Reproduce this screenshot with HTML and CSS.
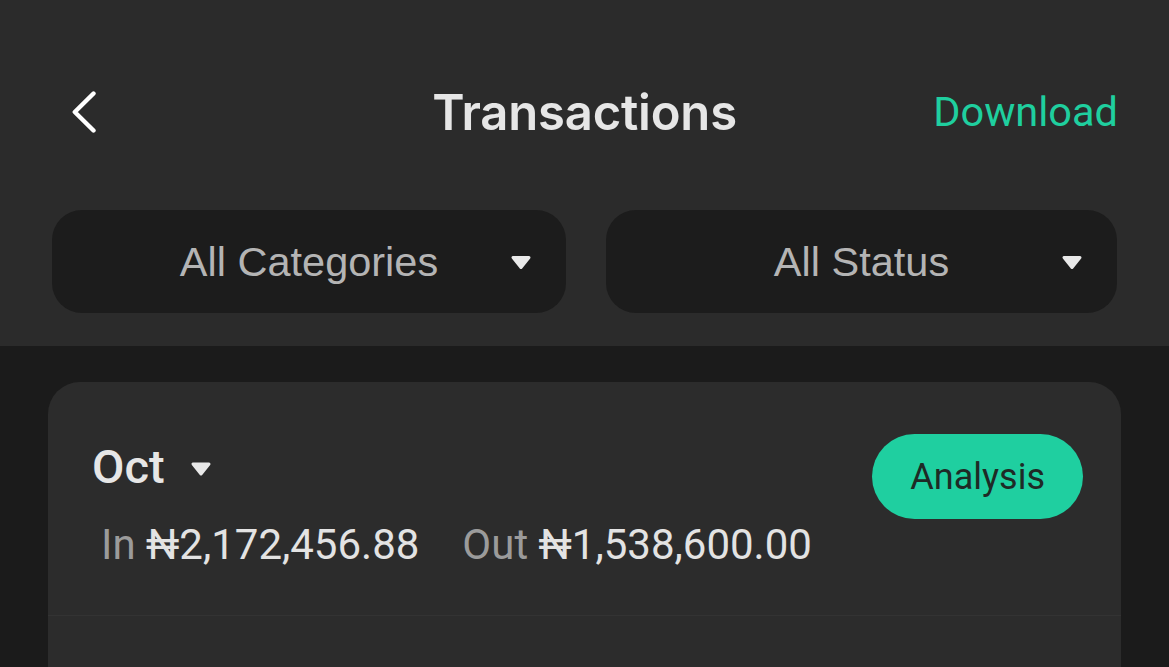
FILE: index.html
```html
<!DOCTYPE html>
<html lang="en">
<head>
<meta charset="utf-8">
<title>Transactions</title>
<link rel="stylesheet" href="styles.css">
</head>
<body>
<header class="top">
  <nav class="navbar">
    <button class="back" aria-label="Back">
      <svg width="24" height="42" viewBox="0 0 24 42"><path d="M21.5 2.5 L2.8 21 L21.5 39.5" fill="none" stroke="#ffffff" stroke-width="4.4" stroke-linecap="round" stroke-linejoin="round"/></svg>
    </button>
    <h1 class="title">Transactions</h1>
    <a class="download">Download</a>
  </nav>
  <div class="filters">
    <div class="select">
      <span class="select-label">All Categories</span>
      <svg class="caret" width="22" height="15" viewBox="0 0 22 15"><polygon points="3,2.5 19,2.5 11,12.5" fill="#e9e9e9" stroke="#e9e9e9" stroke-width="3" stroke-linejoin="round"/></svg>
    </div>
    <div class="select">
      <span class="select-label">All Status</span>
      <svg class="caret" width="22" height="15" viewBox="0 0 22 15"><polygon points="3,2.5 19,2.5 11,12.5" fill="#e9e9e9" stroke="#e9e9e9" stroke-width="3" stroke-linejoin="round"/></svg>
    </div>
  </div>
</header>
<main class="content">
  <section class="card">
    <div class="summary">
      <div class="summary-left">
        <div class="month">
          <span class="month-name">Oct</span>
          <svg class="month-caret" width="22" height="16" viewBox="0 0 22 16"><polygon points="3,3 19,3 11,13" fill="#e9e9e9" stroke="#e9e9e9" stroke-width="3" stroke-linejoin="round"/></svg>
        </div>
        <div class="totals">
          <span class="total"><span class="lbl">In</span> ₦2,172,456.88</span>
          <span class="total"><span class="lbl">Out</span> ₦1,538,600.00</span>
        </div>
      </div>
      <button class="analysis">Analysis</button>
    </div>
    <div class="list"></div>
  </section>
</main>
</body>
</html>
```
FILE: styles.css
```css
* { box-sizing: border-box; }
html, body { margin: 0; padding: 0; }
body {
  background: #1b1b1b;
  font-family: Roboto, "Noto Sans", sans-serif;
  height: 667px;
  overflow: hidden;
}
.top {
  background: #2b2b2b;
  padding: 14px 52px 33px;
}
.navbar {
  height: 196px;
  display: grid;
  grid-template-columns: 1fr auto 1fr;
  align-items: center;
}
.back {
  justify-self: start;
  background: none;
  border: 0;
  padding: 0;
  margin-left: 20px;
  display: flex;
}
.title {
  margin: 0;
  font-family: Inter, "Noto Sans", sans-serif;
  font-weight: 600;
  font-size: 49px;
  color: #e6e6e6;
  line-height: 1;
  letter-spacing: -0.2px;
}
.download {
  justify-self: end;
  font-size: 41.5px;
  color: #1fcf9f;
  line-height: 1;
  margin-right: -1px;
}
.filters {
  display: grid;
  grid-template-columns: 514px 511px;
  gap: 40px;
}
.select {
  height: 103px;
  border-radius: 30px;
  background: #1c1c1c;
  display: grid;
  grid-template-columns: 1fr auto 1fr;
  align-items: center;
}
.select-label {
  grid-column: 2;
  font-family: "Liberation Sans", Arial, sans-serif;
  font-size: 41.5px;
  color: #b4b4b4;
  line-height: 1;
}
.caret {
  grid-column: 3;
  justify-self: end;
  margin-top: 2px;
  margin-right: 34px;
}
.content {
  padding: 36px 48px 0;
}
.card {
  background: #2c2c2c;
  border-radius: 32px 32px 0 0;
  min-height: 300px;
}
.summary {
  display: flex;
  justify-content: space-between;
  align-items: flex-start;
  padding: 52px 38px 45px 44px;
  border-bottom: 1px solid #333333;
}
.summary-left {
  padding-top: 5px;
}
.month {
  display: flex;
  align-items: center;
  gap: 25px;
  height: 56px;
}
.month-name {
  font-size: 47px;
  font-weight: 500;
  color: #e6e6e6;
  line-height: 56px;
}
.month-caret {
  margin-top: 4px;
}
.totals {
  margin-top: 25px;
  padding-left: 9px;
  display: flex;
  gap: 43px;
  font-size: 42px;
  line-height: 50px;
  color: #e3e3e3;
}
.lbl {
  color: #9b9b9b;
}
.analysis {
  height: 85px;
  padding: 0 38px;
  border: 0;
  border-radius: 43px;
  background: #1fcfa0;
  color: #1e2a26;
  font-family: Roboto, sans-serif;
  font-size: 36px;
  line-height: 1;
}
.list {
  height: 60px;
}
```
